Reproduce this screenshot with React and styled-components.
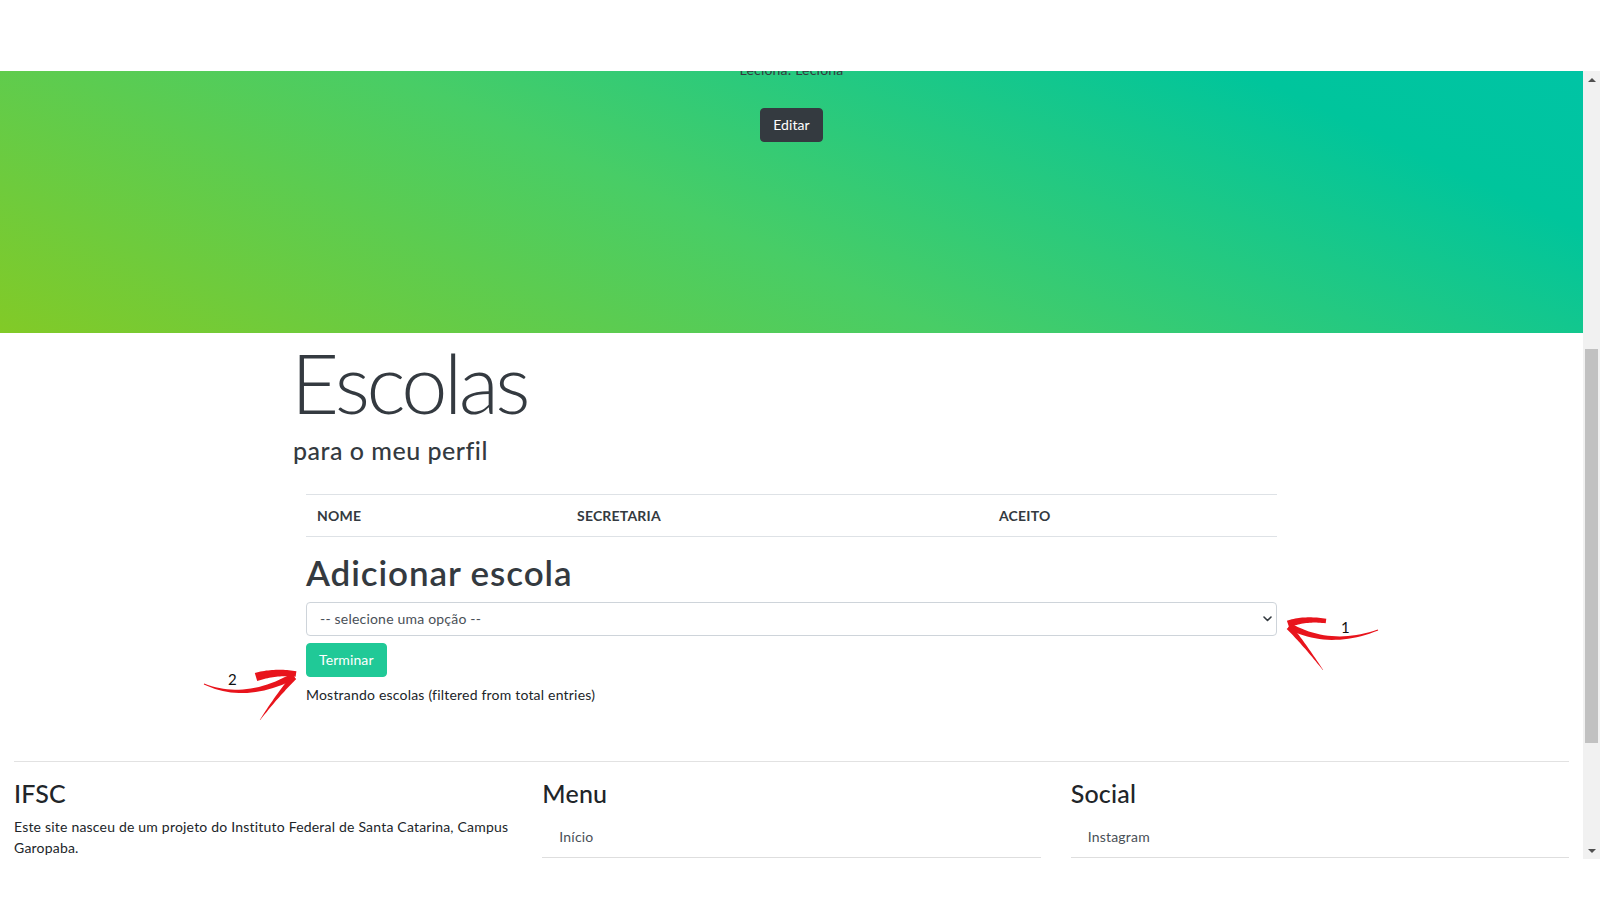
import React, { useLayoutEffect, useRef } from "react";
import styled, { createGlobalStyle } from "styled-components";

const GlobalStyle = createGlobalStyle`
  html, body {
    margin: 0;
    height: 100%;
    overflow: hidden;
    background: #fff;
  }
  body {
    font-family: Lato, "Open Sans", sans-serif;
    font-size: 14px;
    letter-spacing: 0.2px;
    color: #212529;
  }
  * { box-sizing: border-box; }
`;

// helpers for the hand drawn red arrows
function quad(p0, c, p1, n = 22) {
  const pts = [];
  for (let i = 0; i <= n; i++) {
    const t = i / n;
    const u = 1 - t;
    pts.push([
      u * u * p0[0] + 2 * u * t * c[0] + t * t * p1[0],
      u * u * p0[1] + 2 * u * t * c[1] + t * t * p1[1],
    ]);
  }
  return pts;
}

function taper(pts, w0, w1) {
  const n = pts.length;
  const left = [];
  const right = [];
  for (let i = 0; i < n; i++) {
    const [x, y] = pts[i];
    const a = pts[Math.max(i - 1, 0)];
    const b = pts[Math.min(i + 1, n - 1)];
    const dx = b[0] - a[0];
    const dy = b[1] - a[1];
    const len = Math.hypot(dx, dy) || 1;
    const nx = -dy / len;
    const ny = dx / len;
    const w = (w0 + (w1 - w0) * (i / (n - 1))) / 2;
    left.push([x + nx * w, y + ny * w]);
    right.push([x - nx * w, y - ny * w]);
  }
  const f = (p) => `${p[0].toFixed(1)} ${p[1].toFixed(1)}`;
  return `M${left.map(f).join(" L")} L${right.reverse().map(f).join(" L")} Z`;
}

const strokes = [
  // arrow 1
  taper(quad([1289, 626], [1330, 648], [1378, 630]), 6.5, 1),
  taper(quad([1288, 624], [1305, 618], [1326, 621]), 7, 4.5),
  taper(quad([1289, 627], [1304, 644], [1323, 670]), 6, 0.4),
  // arrow 2
  taper(quad([204, 684], [245, 702], [294, 676]), 1, 6.5),
  taper(quad([256, 677], [276, 671], [296, 674]), 8.5, 5.5),
  taper(quad([294, 677], [276, 697], [260, 720]), 6, 0.4),
];

const Page = styled.div`
  position: relative;
  height: 900px;
  display: flex;
  flex-direction: column;
`;

const TopBar = styled.header`
  height: 71px;
  background: #fff;
`;

const Frame = styled.div`
  height: 788px;
  display: flex;
`;

const Viewport = styled.div`
  flex: 1;
  overflow: hidden;
`;

const BottomGap = styled.div`
  flex: 1;
  background: #fff;
`;

const Rail = styled.div`
  width: 17px;
  background: #f1f1f1;
  display: flex;
  flex-direction: column;
`;

const RailButton = styled.div`
  height: 17px;
  display: flex;
  align-items: center;
  justify-content: center;
  &::after {
    content: "";
    border-left: 4px solid transparent;
    border-right: 4px solid transparent;
    ${(p) =>
      p.$dir === "up"
        ? "border-bottom: 4px solid #505050;"
        : "border-top: 4px solid #505050;"}
  }
`;

const Track = styled.div`
  flex: 1;
`;

const Thumb = styled.div`
  margin: ${(p) => p.$top}px 2px 0;
  height: ${(p) => p.$size}px;
  background: #c1c1c1;
`;

const Hero = styled.section`
  background: linear-gradient(
    25deg,
    #82ca27 0%,
    #48cd66 30%,
    #00c59c 57%,
    #00c4a5 68%,
    #00bdbd 100%
  );
  padding: 260px 0 191px;
  display: flex;
  flex-direction: column;
  align-items: center;
`;

const Avatar = styled.div`
  width: 180px;
  height: 180px;
  border-radius: 50%;
  border: 4px solid #fff;
  background: rgba(255, 255, 255, 0.35);
  margin-bottom: 24px;
`;

const Subtitle = styled.p`
  margin: 0;
  font-size: 14px;
  line-height: 21px;
  color: #343a40;
`;

const Button = styled.button`
  font-family: inherit;
  font-size: 14px;
  letter-spacing: 0.1px;
  line-height: 20px;
  padding: 6px 12px;
  border: 1px solid ${(p) => p.$bg};
  border-radius: 4px;
  background: ${(p) => p.$bg};
  color: #fff;
  cursor: pointer;
  margin-top: ${(p) => p.$mt || 0}px;
  align-self: ${(p) => p.$align || "auto"};
`;

const Section = styled.main`
  max-width: 997px;
  margin: 0 auto;
  padding-bottom: 56px;
`;

const Title = styled.h1`
  margin: 0 0 0 -2px;
  font-size: 83px;
  font-weight: 300;
  letter-spacing: -3.6px;
  line-height: 1.2;
  color: #343a40;
`;

const Lead = styled.h4`
  margin: 2px 0 0;
  font-size: 25px;
  font-weight: 500;
  letter-spacing: 0.5px;
  line-height: 1.2;
  color: #343a40;
`;

const Inner = styled.div`
  padding: 0 13px;
  display: flex;
  flex-direction: column;
`;

const Table = styled.table`
  width: 100%;
  border-collapse: collapse;
  margin-top: 29px;
`;

const Th = styled.th`
  text-align: left;
  width: ${(p) => p.$w || "auto"};
  padding: 11px 11px;
  font-size: 14px;
  line-height: 19px;
  font-weight: 700;
  color: #343a40;
  border-top: 1px solid #dee2e6;
  border-bottom: 1px solid #dee2e6;
`;

const SubTitle = styled.h2`
  margin: 14px 0 9px;
  font-size: 35px;
  font-weight: 600;
  letter-spacing: 0.9px;
  line-height: 1.2;
  color: #343a40;
`;

const SelectWrap = styled.div`
  position: relative;
`;

const Select = styled.select`
  width: 100%;
  appearance: none;
  font-family: inherit;
  font-size: 14px;
  letter-spacing: 0.2px;
  line-height: 20px;
  height: 34px;
  padding: 6px 13px;
  color: #495057;
  background: #fff;
  border: 1px solid #ced4da;
  border-radius: 4px;
`;

const Chevron = styled.svg`
  position: absolute;
  right: 5px;
  top: 14px;
  pointer-events: none;
`;

const Info = styled.p`
  margin: 7px 0 0;
  font-size: 14px;
  line-height: 21px;
`;

const Footer = styled.footer`
  padding: 0 14px 40px;
`;

const FooterRow = styled.div`
  border-top: 1px solid #e2e2e2;
  padding-top: 16px;
  display: grid;
  grid-template-columns: repeat(3, 1fr);
  gap: 30px;
`;

const FooterTitle = styled.h4`
  margin: 0 0 8px;
  font-size: 25px;
  font-weight: 500;
  line-height: 1.2;
  color: #212529;
`;

const FooterText = styled.p`
  margin: 0;
  font-size: 14px;
  line-height: 21px;
`;

const LinkList = styled.ul`
  list-style: none;
  margin: 0;
  padding: 0;
`;

const LinkItem = styled.li`
  padding: 10px 17px 10px;
  font-size: 14px;
  line-height: 21px;
  color: #495057;
  border-bottom: 1px solid #dedede;
`;

const Overlay = styled.svg`
  position: absolute;
  left: 0;
  top: 0;
  pointer-events: none;
`;

export default function App() {
  const viewRef = useRef(null);
  const lineRef = useRef(null);

  useLayoutEffect(() => {
    const v = viewRef.current;
    const el = lineRef.current;
    if (!v || !el) return;
    const off =
      el.getBoundingClientRect().top - v.getBoundingClientRect().top + v.scrollTop;
    v.scrollTop = off + 12;
  }, []);

  return (
    <Page>
      <GlobalStyle />
      <TopBar />
      <Frame>
        <Viewport ref={viewRef}>
          <Hero>
            <Avatar />
            <Subtitle ref={lineRef}>Leciona: Leciona</Subtitle>
            <Button $bg="#343a40" $mt={28}>
              Editar
            </Button>
          </Hero>

          <Section>
            <Title>Escolas</Title>
            <Lead>para o meu perfil</Lead>
            <Inner>
              <Table>
                <thead>
                  <tr>
                    <Th $w="260px">NOME</Th>
                    <Th $w="422px">SECRETARIA</Th>
                    <Th>ACEITO</Th>
                  </tr>
                </thead>
              </Table>
              <SubTitle>Adicionar escola</SubTitle>
              <SelectWrap>
                <Select defaultValue="">
                  <option value="">-- selecione uma opção --</option>
                </Select>
                <Chevron width="9" height="6" viewBox="0 0 9 6">
                  <path
                    d="M1 1l3.5 3.5L8 1"
                    fill="none"
                    stroke="#343a40"
                    strokeWidth="1.6"
                    strokeLinecap="round"
                    strokeLinejoin="round"
                  />
                </Chevron>
              </SelectWrap>
              <Button $bg="#20c997" $mt={7} $align="flex-start">
                Terminar
              </Button>
              <Info>Mostrando escolas (filtered from total entries)</Info>
            </Inner>
          </Section>

          <Footer>
            <FooterRow>
              <div>
                <FooterTitle>IFSC</FooterTitle>
                <FooterText>
                  Este site nasceu de um projeto do Instituto Federal de Santa
                  Catarina, Campus Garopaba.
                </FooterText>
              </div>
              <div>
                <FooterTitle>Menu</FooterTitle>
                <LinkList>
                  <LinkItem>Início</LinkItem>
                </LinkList>
              </div>
              <div>
                <FooterTitle>Social</FooterTitle>
                <LinkList>
                  <LinkItem>Instagram</LinkItem>
                </LinkList>
              </div>
            </FooterRow>
          </Footer>
        </Viewport>
        <Rail>
          <RailButton $dir="up" />
          <Track>
            <Thumb $top={261} $size={394} />
          </Track>
          <RailButton $dir="down" />
        </Rail>
      </Frame>
      <BottomGap />

      <Overlay width="1600" height="900" viewBox="0 0 1600 900">
        {strokes.map((d, i) => (
          <path key={i} d={d} fill="#e8141c" />
        ))}
        <text x="1341" y="633" fontFamily="Lato, sans-serif" fontSize="15" fill="#111">
          1
        </text>
        <text x="228" y="685" fontFamily="Lato, sans-serif" fontSize="15" fill="#111">
          2
        </text>
      </Overlay>
    </Page>
  );
}
